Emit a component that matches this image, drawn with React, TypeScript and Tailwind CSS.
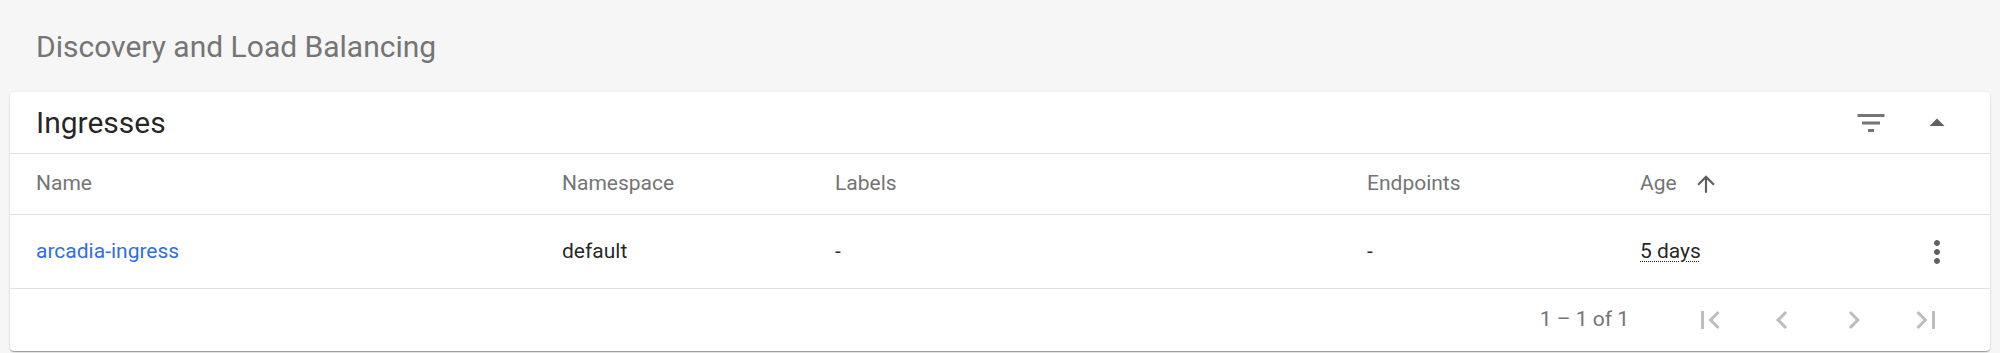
const P = {
  filter: "M10 18h4v-2h-4v2zM3 6v2h18V6H3zm3 7h12v-2H6v2z",
  dropUp: "M7 14l5-5 5 5z",
  arrowUp: "M4 12l1.41 1.41L11 7.83V20h2V7.83l5.58 5.59L20 12l-8-8-8 8z",
  more: "M12 8c1.1 0 2-.9 2-2s-.9-2-2-2-2 .9-2 2 .9 2 2 2zm0 2c-1.1 0-2 .9-2 2s.9 2 2 2 2-.9 2-2-.9-2-2-2zm0 6c-1.1 0-2 .9-2 2s.9 2 2 2 2-.9 2-2-.9-2-2-2z",
  first: "M18.41 16.59L13.82 12l4.59-4.59L17 6l-6 6 6 6zM6 6h2v12H6z",
  prev: "M15.41 7.41L14 6l-6 6 6 6 1.41-1.41L10.83 12z",
  next: "M10 6L8.59 7.41 13.17 12l-4.58 4.59L10 18l6-6z",
  last: "M5.59 7.41L10.18 12l-4.59 4.59L7 18l6-6-6-6zM16 6h2v12h-2z",
};

const Icon = ({ d, size = 36, className = "" }: { d: string; size?: number; className?: string }) => (
  <svg width={size} height={size} viewBox="0 0 24 24" className={className} fill="currentColor">
    <path d={d} />
  </svg>
);

const cols = "grid grid-cols-[526px_273px_532px_273px_1fr_72px] items-center pl-[26px] pr-[17px]";

const App = () => {
  return (
    <div className="min-h-[353px] bg-[#f6f6f6] font-['Roboto',sans-serif] overflow-hidden">
      {/* Page title */}
      <div className="h-[92px] flex items-center pl-[36px] text-[30px] text-[#757575]">
        Discovery and Load Balancing
      </div>

      {/* Card */}
      <div className="mx-[10px] bg-white rounded-[4px] shadow-[0_2px_1px_-1px_rgba(0,0,0,.2),0_1px_1px_0_rgba(0,0,0,.14),0_1px_3px_0_rgba(0,0,0,.12)]">
        <div className="h-[62px] flex items-center pl-[26px] pr-[35px] border-b border-[#e0e0e0]">
          <span className="text-[30px] text-[rgba(0,0,0,.87)]">Ingresses</span>
          <div className="ml-auto flex items-center gap-[30px] text-[#757575]">
            <Icon d={P.filter} />
            <Icon d={P.dropUp} className="text-[#616161]" />
          </div>
        </div>

        {/* Column headers */}
        <div className={`${cols} h-[61px] border-b border-[#e0e0e0] text-[21px] text-[#757575]`}>
          <span>Name</span>
          <span>Namespace</span>
          <span>Labels</span>
          <span>Endpoints</span>
          <span className="flex items-center gap-[16px]">
            Age
            <Icon d={P.arrowUp} size={26} className="text-[#5f5f5f]" />
          </span>
          <span />
        </div>

        {/* Row */}
        <div className={`${cols} h-[74px] border-b border-[#e0e0e0] text-[21px] text-[rgba(0,0,0,.87)]`}>
          <span className="text-[#326de6]">arcadia-ingress</span>
          <span>default</span>
          <span>-</span>
          <span>-</span>
          <span>
            <span className="underline decoration-dotted decoration-1 underline-offset-[3px]">5 days</span>
          </span>
          <span className="flex justify-center text-[#616161]">
            <Icon d={P.more} />
          </span>
        </div>

        {/* Paginator */}
        <div className="h-[62px] flex items-center justify-end pr-[28px] text-[21px] text-[#757575]">
          <span className="mr-[45px]">1 – 1 of 1</span>
          {[P.first, P.prev, P.next, P.last].map((d, i) => (
            <span key={i} className="w-[72px] flex justify-center text-[#bdbdbd]">
              <Icon d={d} />
            </span>
          ))}
        </div>
      </div>
    </div>
  );
};

export default App;
